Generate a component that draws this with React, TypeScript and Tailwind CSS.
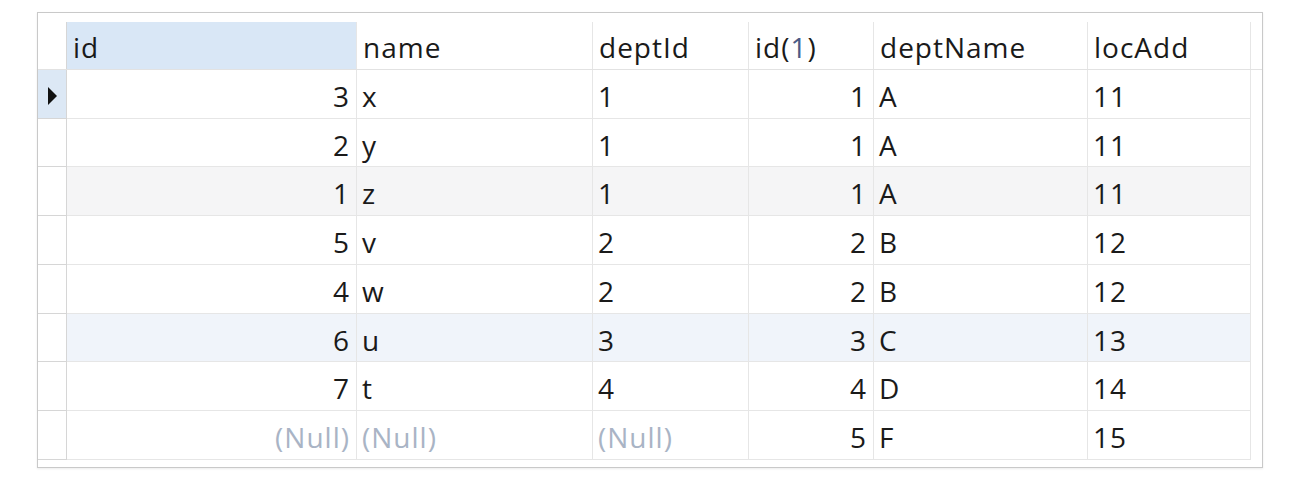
import React from 'react';

type Cell = { v: string; right?: boolean; nul?: boolean };

const cols = [
  { name: 'id', w: 'w-[290px]' },
  { name: 'name', w: 'w-[236px]' },
  { name: 'deptId', w: 'w-[156px]' },
  { name: 'id(1)', w: 'w-[125px]' },
  { name: 'deptName', w: 'w-[214px]' },
  { name: 'locAdd', w: 'w-[163px]' },
];

const raw: [string, string, string, string, string, string][] = [
  ['3', 'x', '1', '1', 'A', '11'],
  ['2', 'y', '1', '1', 'A', '11'],
  ['1', 'z', '1', '1', 'A', '11'],
  ['5', 'v', '2', '2', 'B', '12'],
  ['4', 'w', '2', '2', 'B', '12'],
  ['6', 'u', '3', '3', 'C', '13'],
  ['7', 't', '4', '4', 'D', '14'],
  ['(Null)', '(Null)', '(Null)', '5', 'F', '15'],
];

const heights = ['h-[49px]', 'h-[48px]', 'h-[49px]', 'h-[49px]', 'h-[49px]', 'h-[48px]', 'h-[49px]', 'h-[49px]'];
const rowBg = ['bg-white', 'bg-white', 'bg-[#f5f5f6]', 'bg-white', 'bg-white', 'bg-[#f0f4fa]', 'bg-white', 'bg-white'];
const rightAligned = [true, false, false, true, false, false];

function HeaderLabel({ name }: { name: string }) {
  if (name === 'id(1)') {
    return (
      <span>
        id(<span className="text-[#4b5b86]">1</span>)
      </span>
    );
  }
  return <span>{name}</span>;
}

export default function App() {
  return (
    <div className="min-h-screen bg-white pl-[37px] pt-[12px] font-['Open_Sans',sans-serif] text-[28px] tracking-[1px] text-[#1a1a1a]">
      <div className="w-[1226px] border border-[#c9c9c9] pt-[9px] pb-[7px] shadow-[0_1px_2px_rgba(0,0,0,0.08)]">
        {/* header */}
        <div className="flex h-[48px] border-b border-[#e2e2e2]">
          <div className="w-[29px] border-r border-[#d6d6d6] bg-white" />
          {cols.map((c, i) => (
            <div
              key={c.name}
              className={`${c.w} flex items-center border-r border-[#e6e6e6] pl-[6px] pt-[2px] ${i === 0 ? 'bg-[#d9e7f6]' : 'bg-white'}`}
            >
              <HeaderLabel name={c.name} />
            </div>
          ))}
        </div>
        {/* rows */}
        {raw.map((r, ri) => (
          <div key={ri} className={`flex ${heights[ri]}`}>
            <div
              className={`flex w-[29px] items-center border-b border-r border-[#d6d6d6] pl-[10px] ${ri === 0 ? 'bg-[#dce8f5]' : 'bg-white'}`}
            >
              {ri === 0 && (
                <svg width="10" height="18" viewBox="0 0 10 18" className="mt-[3px]">
                  <path d="M0 0 L9 9 L0 18 Z" fill="#111" />
                </svg>
              )}
            </div>
            {r.map((v, ci) => {
              const nul = v === '(Null)';
              const cell: Cell = { v, right: rightAligned[ci], nul };
              return (
                <div
                  key={ci}
                  className={`${cols[ci].w} flex items-center border-b border-r border-[#e6e6e6] pt-[4px] ${rowBg[ri]} ${cell.right ? 'justify-end pr-[6px]' : 'pl-[5px]'} ${cell.nul ? 'text-[#a9b4c5]' : ''}`}
                >
                  {cell.v}
                </div>
              );
            })}
          </div>
        ))}
      </div>
    </div>
  );
}
